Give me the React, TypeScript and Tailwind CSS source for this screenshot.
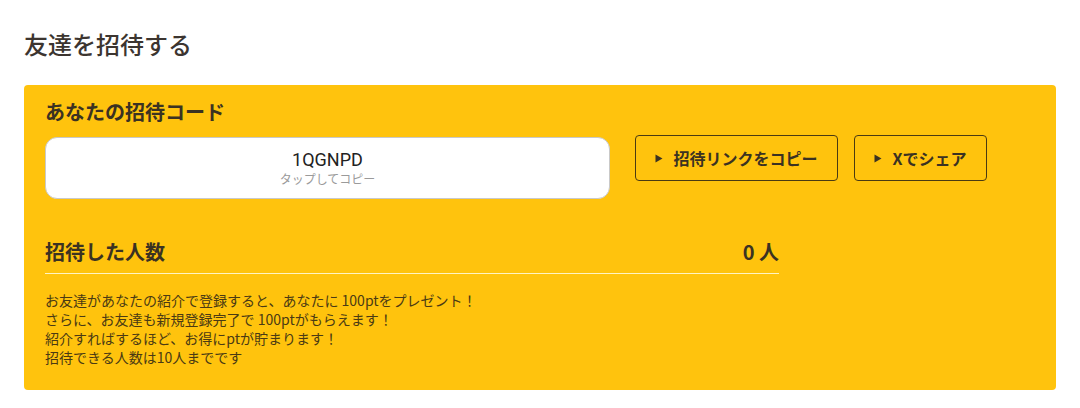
import { useState } from 'react'

const jp = "font-['Noto_Sans_CJK_JP','Noto_Sans',sans-serif]"

function Triangle() {
  return (
    <svg width="8" height="9" viewBox="0 0 8 9" aria-hidden="true">
      <path d="M0.5 0.5 L7.5 4.5 L0.5 8.5 Z" fill="#3b3222" />
    </svg>
  )
}

export default function App() {
  const [code] = useState('1QGNPD')
  const invited = 0

  return (
    <div className={`min-h-[408px] bg-white px-6 pt-[28px] ${jp}`}>
      <h1 className="text-[24px] font-medium leading-[32px] text-[#3c3530]">友達を招待する</h1>

      <section className="mt-[25px] rounded bg-[#ffc30d] px-[21px] pt-[15px] pb-[23px] text-[#3b3222]">
        {/* Code */}
        <p className="text-[20px] font-bold leading-[24px]">あなたの招待コード</p>
        <div className="mt-[11px] flex items-start gap-[25px]">
          <button
            type="button"
            className="mt-[2px] flex h-[62px] w-[565px] flex-col items-center justify-center rounded-xl border border-[#c9c9c9] bg-white"
          >
            <span className="font-['Roboto',sans-serif] text-[18px] leading-[22px] text-[#222]">{code}</span>
            <span className="text-[12px] leading-[16px] text-[#9a9a9a]">タップしてコピー</span>
          </button>
          <div className="flex gap-4">
            <button
              type="button"
              className="flex h-[46px] w-[203px] items-center justify-center gap-[10px] rounded-sm border border-[#4a3a12] text-[16px] font-bold"
            >
              <Triangle />
              招待リンクをコピー
            </button>
            <button
              type="button"
              className="flex h-[46px] w-[133px] items-center justify-center gap-[10px] rounded-sm border border-[#4a3a12] text-[16px] font-bold"
            >
              <Triangle />
              Xでシェア
            </button>
          </div>
        </div>

        {/* Count */}
        <div className="mt-[41px] flex w-[734px] items-center justify-between border-b border-[#fff4c4] pb-[9px]">
          <span className="text-[20px] font-bold leading-[24px]">招待した人数</span>
          <span className="text-[20px] font-bold leading-[24px]">{invited} 人</span>
        </div>

        <div className="mt-[17px] text-[14px] leading-[19px] text-[#4a3a14]">
          <p>お友達があなたの紹介で登録すると、あなたに 100ptをプレゼント！</p>
          <p>さらに、お友達も新規登録完了で 100ptがもらえます！</p>
          <p>紹介すればするほど、お得にptが貯まります！</p>
          <p>招待できる人数は10人までです</p>
        </div>
      </section>
    </div>
  )
}
